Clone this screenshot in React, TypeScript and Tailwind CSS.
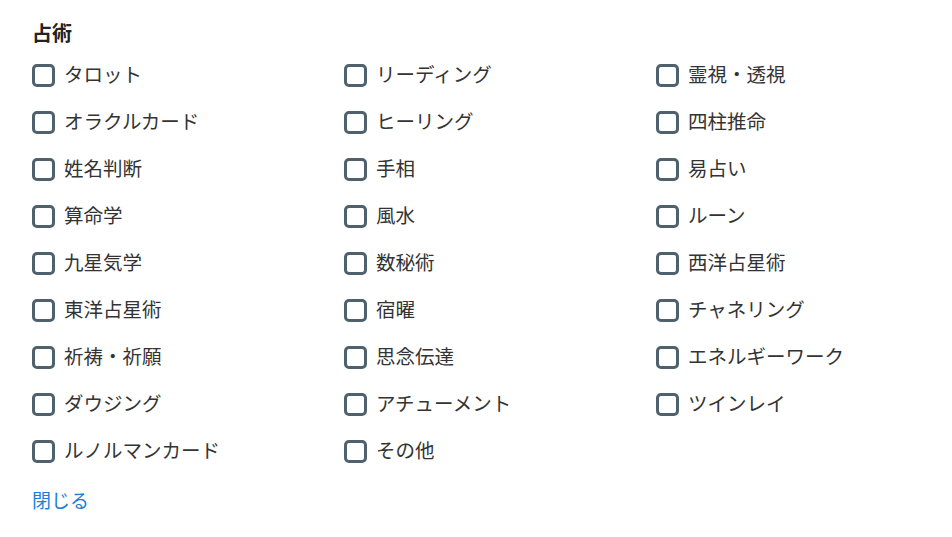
import React from 'react';

const items = [
    'タロット', 'リーディング', '霊視・透視',
    'オラクルカード', 'ヒーリング', '四柱推命',
    '姓名判断', '手相', '易占い',
    '算命学', '風水', 'ルーン',
    '九星気学', '数秘術', '西洋占星術',
    '東洋占星術', '宿曜', 'チャネリング',
    '祈祷・祈願', '思念伝達', 'エネルギーワーク',
    'ダウジング', 'アチューメント', 'ツインレイ',
    'ルノルマンカード', 'その他',
];

const font = { fontFamily: '"Noto Sans CJK JP", "Noto Sans", sans-serif' };

export default function App() {
    return (
        <div className="w-[952px] h-[537px] bg-white pl-[32px] pt-[19px] text-[#212529]" style={font}>
            <h2 className="text-[20px] font-bold leading-[28px] text-[#222]">占術</h2>
            <div className="grid grid-cols-[312px_312px_312px] mt-[5px]">
                {items.map((label) => (
                    <label key={label} className="flex items-center h-[47px] cursor-pointer">
                        <span className="w-[23px] h-[23px] border-[3px] border-[#4e616c] rounded-[5px] bg-white shrink-0" />
                        <span className="ml-[9px] text-[19.5px] leading-[24px] text-[#333] -mt-[3px]">{label}</span>
                    </label>
                ))}
            </div>
            <a className="inline-block mt-[13px] text-[19px] leading-[24px] text-[#1a80d9]">閉じる</a>
        </div>
    );
}
